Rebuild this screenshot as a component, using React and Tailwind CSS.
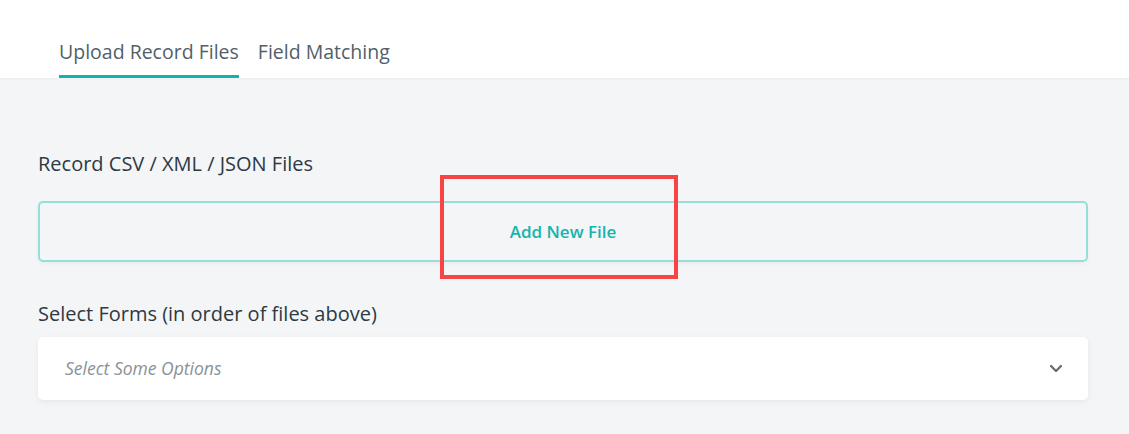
import React from 'react';

const tabs = ['Upload Record Files', 'Field Matching'];

export default function App() {
  return (
    <div className="w-[1129px] h-[434px] overflow-hidden bg-[#f4f5f7] font-['Open_Sans','Noto_Sans',sans-serif]">
      <div className="h-[78px] bg-white flex items-end px-[59px] shadow-[0_1px_3px_rgba(0,0,0,0.04)]">
        <div className="flex gap-[19px]">
          {tabs.map((t, i) => (
            <div
              key={t}
              className={`pb-[11px] text-[19.5px] leading-[24px] text-[#525f69] border-b-[3px] ${
                i === 0 ? 'border-[#12b3ad]' : 'border-transparent'
              }`}
            >
              {t}
            </div>
          ))}
        </div>
      </div>

      <div className="ml-[38px] pt-[74px] w-[1050px]">
        <div className="text-[20px] leading-[24px] text-[#2d3a43]">Record CSV / XML / JSON Files</div>

        <div className="relative mt-[25px]">
          <button className="w-full h-[61px] rounded-[5px] border-2 border-[#97ddd8] flex items-center justify-center text-[17px] font-semibold text-[#15b4ad] shadow-[0_2px_4px_rgba(0,0,0,0.04)]">
            Add New File
          </button>
          <div className="absolute left-[402px] top-[-26px] w-[238px] h-[104px] border-4 border-[#f84445]"></div>
        </div>

        <div className="mt-[40px] text-[20px] leading-[24px] text-[#2d3a43]">Select Forms (in order of files above)</div>

        <div className="mt-[11px] h-[63px] bg-white rounded-[5px] shadow-[0_2px_6px_rgba(0,0,0,0.06)] flex items-center justify-between pl-[27px] pr-[25px]">
          <span className="italic text-[17.5px] text-[#8a9299]">Select Some Options</span>
          <svg width="14" height="9" viewBox="0 0 14 9" fill="none">
            <path d="M2 2l5 5 5-5" stroke="#5f6b75" strokeWidth="2.2" strokeLinecap="round" strokeLinejoin="round" />
          </svg>
        </div>
      </div>
    </div>
  );
}
